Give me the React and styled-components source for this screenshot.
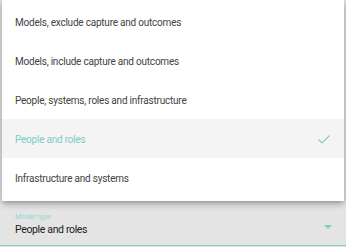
import React from "react";
import styled, { createGlobalStyle } from "styled-components";

const Global = createGlobalStyle`
  html, body { margin: 0; padding: 0; background: #e2e2e2; }
  body { font-family: Roboto, "Noto Sans", sans-serif; -webkit-font-smoothing: antialiased; }
`;

const Stage = styled.div`
  position: relative;
  width: 346px;
  height: 247px;
  display: flex;
  flex-direction: column;
  justify-content: flex-end;
  background: #e2e2e2;
  overflow: hidden;
`;

const Field = styled.div`
  position: relative;
  height: 45px;
  display: flex;
  flex-direction: column;
  justify-content: flex-end;
  padding: 0 14px 8px 15px;
  box-sizing: border-box;
  background: #e4e4e4;
  border-bottom: 1px solid #80cbc4;
  margin-bottom: 1px;
`;

const Label = styled.div`
  font-size: 7.5px;
  line-height: 9px;
  color: #95d6cf;
  margin-bottom: 2px;
  letter-spacing: -0.1px;
`;

const Value = styled.div`
  font-size: 10.5px;
  line-height: 14px;
  color: #212121;
  letter-spacing: -0.35px;
`;

const Arrow = styled.div`
  position: absolute;
  right: 14px;
  top: 24px;
  width: 0;
  height: 0;
  border-left: 4px solid transparent;
  border-right: 4px solid transparent;
  border-top: 4px solid #80cbc4;
`;

const Menu = styled.ul`
  position: absolute;
  top: 0;
  left: 2px;
  right: 2px;
  height: 201px;
  margin: 0;
  padding: 2px 0 0 0;
  box-sizing: border-box;
  list-style: none;
  background: #fff;
  box-shadow: 0 2px 4px -1px rgba(0,0,0,.2), 0 4px 6px 0 rgba(0,0,0,.14), 0 1px 10px 0 rgba(0,0,0,.12);
`;

const Item = styled.li`
  height: 39px;
  display: flex;
  align-items: center;
  justify-content: space-between;
  padding: 1px 13px 0 13px;
  box-sizing: border-box;
  font-size: 10px;
  letter-spacing: -0.22px;
  color: ${(p) => (p.$selected ? "#80cbc4" : "#424242")};
  background: ${(p) => (p.$selected ? "#f4f4f4" : "transparent")};
`;

const Check = () => (
  <svg width="14" height="12" viewBox="0 0 14 12" fill="none">
    <path d="M1.5 6.5 L5 10 L12.5 2.5" stroke="#80cbc4" strokeWidth="1.1" />
  </svg>
);

const items = [
  "Models, exclude capture and outcomes",
  "Models, include capture and outcomes",
  "People, systems, roles and infrastructure",
  "People and roles",
  "Infrastructure and systems",
];

export default function App() {
  const selected = "People and roles";
  return (
    <Stage>
      <Global />
      <Field>
        <Label>Model type</Label>
        <Value>{selected}</Value>
        <Arrow />
      </Field>
      <Menu>
        {items.map((it) => (
          <Item key={it} $selected={it === selected}>
            <span>{it}</span>
            {it === selected && <Check />}
          </Item>
        ))}
      </Menu>
    </Stage>
  );
}
